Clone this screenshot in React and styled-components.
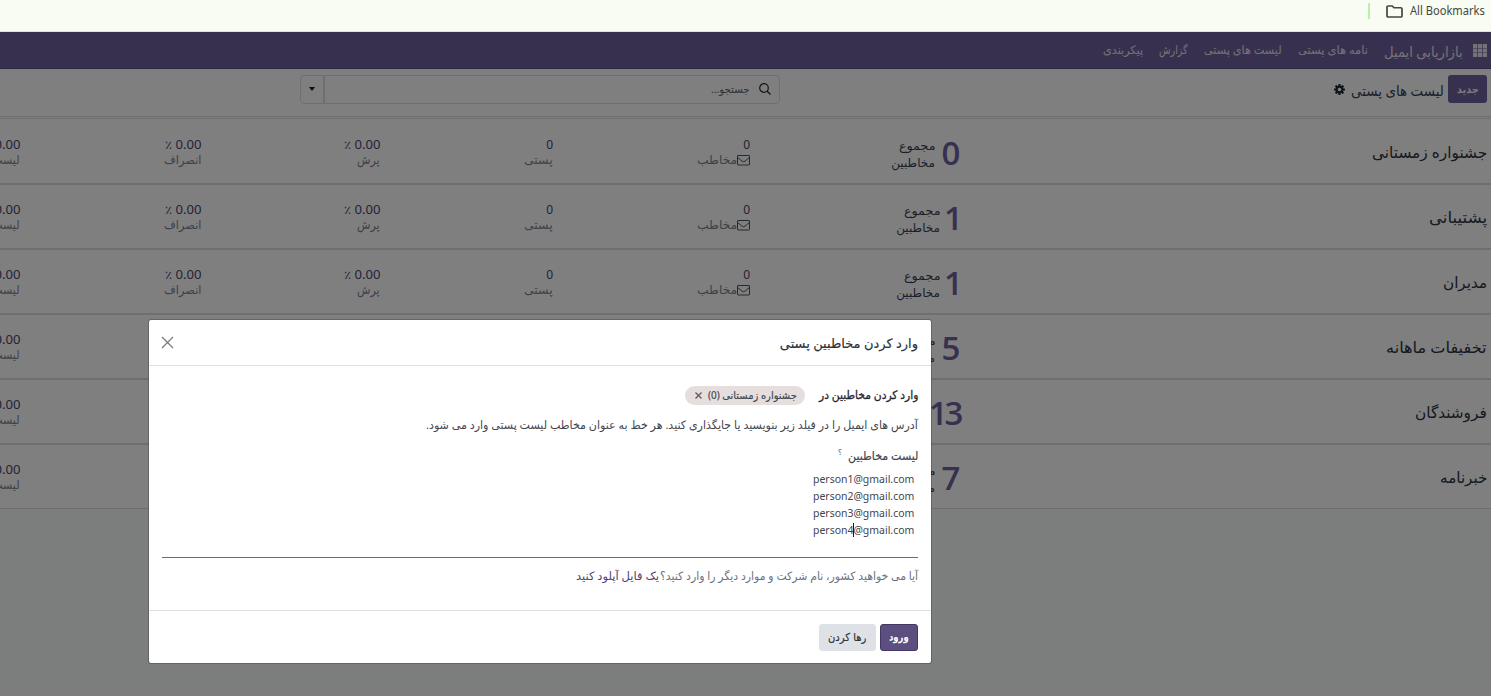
import React, { useLayoutEffect, useRef, useState } from 'react';
import styled, { createGlobalStyle } from 'styled-components';

const Global = createGlobalStyle`
  * { box-sizing: border-box; }
  html, body { margin: 0; padding: 0; overflow: hidden; }
  body { font-family: "Noto Sans", "DejaVu Sans", sans-serif; background: #fff; }
`;

const Screen = styled.div`
  width: 1491px;
  height: 696px;
  overflow: hidden;
  display: flex;
  flex-direction: column;
  position: relative;
`;

const FitBox = styled.span`
  display: block;
  flex: none;
  width: ${(p) => p.$w}px;
  direction: ${(p) => p.$dir || 'rtl'};
  white-space: nowrap;
`;
const FitInner = styled.span`
  display: inline-block;
  transform-origin: ${(p) => (p.$dir === 'ltr' ? 'left' : 'right')} center;
  -webkit-text-stroke: ${(p) => p.$stroke || 0}px currentColor;
`;

/* A label that keeps a fixed column width whatever font is available. */
function Fit({ w, dir, stroke, children }) {
  const ref = useRef(null);
  const [k, setK] = useState(1);
  useLayoutEffect(() => {
    setK(w / ref.current.offsetWidth);
  }, [w]);
  return (
    <FitBox $w={w} $dir={dir}>
      <FitInner ref={ref} $dir={dir} $stroke={stroke} style={{ transform: `scaleX(${k})` }}>
        {children}
      </FitInner>
    </FitBox>
  );
}

const BookmarksBar = styled.div`
  height: 32px;
  flex: none;
  background: #f9fcf3;
  border-bottom: 1px solid #dfe3da;
  display: flex;
  justify-content: flex-end;
  align-items: flex-start;
  padding: 3px 6px 0 0;
  color: #43483f;
  font-size: 12px;
  line-height: 16px;
`;
const BarDivider = styled.span`
  width: 2px;
  height: 16px;
  background: #baf0a8;
  margin-right: 16px;
`;
const FolderIcon = styled.svg`
  width: 17px;
  height: 13px;
  margin: 2px 7px 0 0;
`;

const Page = styled.div`
  flex: 1;
  direction: rtl;
  display: flex;
  flex-direction: column;
  background: #f9fafa;
  color: #374151;
  position: relative;
`;
const Navbar = styled.nav`
  height: 37px;
  flex: none;
  background: #71619e;
  border-bottom: 1px solid #5f5189;
  display: flex;
  align-items: flex-start;
  padding: 0 4px;
  color: #e6e4ee;
  font-size: 11.5px;
  line-height: 35px;
`;
const AppsIcon = styled.svg`
  width: 14px;
  height: 13px;
  margin: 12px 0 0 10px;
`;
const Brand = styled.div`
  font-size: 14px;
  line-height: 39px;
  margin-left: 16px;
`;
const NavItem = styled.div`
  margin-left: 16px;
`;

const ControlPanel = styled.div`
  height: 48px;
  flex: none;
  background: #fff;
  border-bottom: 1px solid #dcdee2;
  display: flex;
  align-items: flex-start;
  padding: 6px 4px 0;
`;
const NewButton = styled.button`
  width: 39px;
  height: 28px;
  padding: 0 8px;
  border: 0;
  border-radius: 3px;
  background: #71619e;
  color: #f4f2f8;
  font: bold 11px/30px "DejaVu Sans", sans-serif;
`;
const PageTitle = styled.div`
  margin: 0 4px 0 6px;
  font-size: 14px;
  line-height: 31px;
`;
const Gear = styled.svg`
  width: 11px;
  height: 11px;
  margin-top: 9px;
`;
const SearchGroup = styled.div`
  width: 480px;
  height: 29px;
  margin-right: 554px;
  border: 1px solid #dcdee2;
  border-radius: 4px;
  display: flex;
  color: #5c6370;
  font-size: 11px;
  line-height: 26px;
`;
const SearchField = styled.div`
  flex: 1;
  display: flex;
  align-items: flex-start;
  padding-right: 8px;
  border-left: 2px solid #dcdee2;
  gap: 9px;
`;
const SearchIcon = styled.svg`
  width: 12px;
  height: 12px;
  margin-top: 7px;
`;
const SearchToggle = styled.div`
  width: 22px;
  display: flex;
  justify-content: center;
  padding-top: 11px;
`;
const Caret = styled.span`
  width: 0;
  height: 0;
  border: 3px solid transparent;
  border-top: 4px solid #111827;
  border-bottom: 0;
`;

const List = styled.div`
  margin-top: 1px;
`;
const Record = styled.div`
  height: 65px;
  background: #fff;
  border-top: 1px solid #dcdee2;
  border-bottom: 1px solid #dcdee2;
  display: grid;
  grid-template-columns: 526px 211px 197px 173px 179px 181px 60px;
  padding-right: 4px;
  &:first-child {
    height: 66px;
    padding-top: 1px;
  }
`;
const Name = styled.div`
  font-size: 15.5px;
  line-height: 24px;
  padding-top: 20px;
  color: #2b3240;
`;
const Total = styled.div`
  display: flex;
  padding-top: 14px;
`;
const Number = styled.div`
  direction: ltr;
  font-family: "Open Sans", sans-serif;
  font-size: 33px;
  font-weight: 600;
  line-height: 38px;
  letter-spacing: ${(p) => (p.$w > 30 ? -3 : 0)}px;
  color: #71619e;
  width: ${(p) => p.$w}px;
  margin-left: 6px;
  display: flex;
  justify-content: center;
`;
const TotalLabel = styled.div`
  font-size: 12px;
  line-height: 17px;
  padding-top: 3px;
  color: #374151;
`;
const Stat = styled.div`
  padding-top: 17px;
`;
const Value = styled.div`
  font-size: 12px;
  line-height: 16px;
  color: #4a4372;
`;
const Caption = styled.div`
  font-size: 12px;
  line-height: 14px;
  color: #7b8190;
  display: flex;
`;
const Envelope = styled.svg`
  width: 13px;
  height: 11px;
  margin-top: 2px;
`;

const Backdrop = styled.div`
  position: absolute;
  inset: 0;
  background: rgba(0, 0, 0, 0.5);
`;
const Modal = styled.div`
  position: absolute;
  left: 148px;
  top: 319px;
  width: 784px;
  height: 345px;
  direction: rtl;
  background: #fff;
  background-clip: padding-box;
  border: 1px solid rgba(0, 0, 0, 0.2);
  border-radius: 3px;
  display: flex;
  flex-direction: column;
  color: #41464f;
`;
const ModalHeader = styled.div`
  height: 46px;
  flex: none;
  border-bottom: 1px solid #dee0e3;
  display: flex;
  justify-content: space-between;
  padding: 0 13px 0 12px;
  font-size: 13px;
  line-height: 46px;
  color: #2b313b;
`;
const CloseIcon = styled.svg`
  width: 13px;
  height: 13px;
  margin-top: 16px;
`;
const ModalBody = styled.div`
  height: 244px;
  flex: none;
  padding: 20px 13px 0;
`;
const FieldRow = styled.div`
  display: flex;
  height: 29px;
  font-size: 11.5px;
  line-height: 17px;
  color: #1f2733;
`;
const Tag = styled.span`
  display: flex;
  align-items: center;
  width: 120px;
  height: 19px;
  margin-right: 14px;
  padding-right: 8px;
  border-radius: 10px;
  background: #e6dedd;
  font-size: 10.5px;
  line-height: 19px;
  color: #41464f;
  gap: 6px;
`;
const TagClose = styled.svg`
  width: 7px;
  height: 7px;
`;
const Help = styled.div`
  height: 31px;
  font-size: 11.5px;
  line-height: 19px;
`;
const ListLabel = styled.div`
  display: flex;
  height: 24px;
  font-size: 11.5px;
  line-height: 19px;
  gap: 6px;
`;
const Hint = styled.sup`
  font-size: 8px;
  line-height: 12px;
  color: #4b6a88;
`;
const Emails = styled.div`
  height: 88px;
  border-bottom: 1px solid #71619e;
  padding: 0 4px 0 0;
  font-size: 11.5px;
  line-height: 17px;
`;
const EmailLine = styled.div`
  display: flex;
  height: 17px;
`;
const TextCursor = styled.i`
  display: inline-block;
  width: 1px;
  height: 14px;
  margin: 0 -1px 0 0;
  background: #000;
  vertical-align: -3px;
`;
const Upload = styled.div`
  display: flex;
  padding-top: 8px;
  font-size: 11.5px;
  line-height: 20px;
  color: #6b7280;
`;
const UploadLink = styled.a`
  color: #4e4373;
  margin-right: 1px;
`;
const ModalFooter = styled.div`
  flex: 1;
  border-top: 1px solid #dedfe5;
  display: flex;
  gap: 4px;
  padding: 13px 13px 0;
`;
const Button = styled.button`
  height: 27px;
  padding: 0 ${(p) => (p.$primary ? 8 : 8.5)}px;
  border-radius: 3px;
  border: 1px solid ${(p) => (p.$primary ? '#443764' : '#dee2e6')};
  background: ${(p) => (p.$primary ? '#5c4f80' : '#dee2e6')};
  color: ${(p) => (p.$primary ? '#fff' : '#2b313b')};
  font: ${(p) => (p.$primary ? 'bold' : 'normal')} 11px/25px "DejaVu Sans", sans-serif;
`;

const records = [
  { name: 'جشنواره زمستانی', w: 115, total: '0', nw: 20 },
  { name: 'پشتیبانی', w: 58, total: '1', nw: 15 },
  { name: 'مدیران', w: 44, total: '1', nw: 15 },
  { name: 'تخفیفات ماهانه', w: 101, total: '5', nw: 20 },
  { name: 'فروشندگان', w: 72, total: '13', nw: 33 },
  { name: 'خبرنامه', w: 47, total: '7', nw: 20 },
];

const rates = [
  ['پرش', 23],
  ['انصراف', 37],
  ['لیست سیاه', 52],
];

const emails = ['person1', 'person2', 'person3', 'person4'];

export default function App() {
  return (
    <Screen>
      <Global />
      <BookmarksBar>
        <BarDivider />
        <FolderIcon viewBox="0 0 17 14" preserveAspectRatio="none" fill="none" stroke="#43483f" strokeWidth="1.7">
          <path d="M1 2.2Q1 1 2.2 1H6.2L8 3H14.8Q16 3 16 4.2V11.8Q16 13 14.8 13H2.2Q1 13 1 11.8Z" />
        </FolderIcon>
        <Fit w={75} dir="ltr">All Bookmarks</Fit>
      </BookmarksBar>
      <Page>
        <Navbar>
          <AppsIcon viewBox="0 0 14 13" fill="#e6e4ee">
            {[0, 4.9, 9.8].map((x) =>
              [0, 4.5, 9].map((y) => <rect key={`${x}-${y}`} x={x} y={y} width="4.2" height="4" />)
            )}
          </AppsIcon>
          <Brand><Fit w={79}>بازاریابی ایمیل</Fit></Brand>
          <NavItem><Fit w={70}>نامه های پستی</Fit></NavItem>
          <NavItem><Fit w={78}>لیست های پستی</Fit></NavItem>
          <NavItem><Fit w={29}>گزارش</Fit></NavItem>
          <NavItem><Fit w={40}>پیکربندی</Fit></NavItem>
        </Navbar>
        <ControlPanel>
          <NewButton><Fit w={22}>جدید</Fit></NewButton>
          <PageTitle><Fit w={93}>لیست های پستی</Fit></PageTitle>
          <Gear viewBox="0 0 12 12">
            <g fill="#1f2937">
              {[0, 45, 90, 135].map((a) => (
                <rect key={a} x="4.8" y="0" width="2.4" height="12" rx="0.5" transform={`rotate(${a} 6 6)`} />
              ))}
              <circle cx="6" cy="6" r="4.4" />
            </g>
            <circle cx="6" cy="6" r="1.9" fill="#fff" />
          </Gear>
          <SearchGroup>
            <SearchField>
              <SearchIcon viewBox="0 0 12 12" fill="none" stroke="#1f2937" strokeWidth="1.2">
                <circle cx="5" cy="5" r="4.3" />
                <path d="M8 8L11.5 11.5" />
              </SearchIcon>
              <Fit w={39}>جستجو...</Fit>
            </SearchField>
            <SearchToggle><Caret /></SearchToggle>
          </SearchGroup>
        </ControlPanel>
        <List>
          {records.map((r) => (
            <Record key={r.name}>
              <Name><Fit w={r.w}>{r.name}</Fit></Name>
              <Total>
                <Number $w={r.nw}>{r.total}</Number>
                <TotalLabel>
                  <Fit w={36}>مجموع</Fit>
                  <Fit w={44}>مخاطبین</Fit>
                </TotalLabel>
              </Total>
              <Stat>
                <Value>0</Value>
                <Caption>
                  <Envelope viewBox="0 0 13 11" fill="none" stroke="#4b5563" strokeWidth="1">
                    <rect x="0.5" y="0.5" width="12" height="9.5" rx="0.5" />
                    <path d="M0.8 2.6L5 6.2Q6.5 7.3 8 6.2L12.2 2.6" />
                  </Envelope>
                  <Fit w={40}>مخاطب</Fit>
                </Caption>
              </Stat>
              <Stat>
                <Value>0</Value>
                <Caption><Fit w={29}>پستی</Fit></Caption>
              </Stat>
              {rates.map(([label, w]) => (
                <Stat key={label}>
                  <Value><Fit w={36}>0.00 ٪</Fit></Value>
                  <Caption><Fit w={w}>{label}</Fit></Caption>
                </Stat>
              ))}
            </Record>
          ))}
        </List>
        <Backdrop />
      </Page>
      <Modal>
        <ModalHeader>
          <Fit w={138} stroke={0.15}>وارد کردن مخاطبین پستی</Fit>
          <CloseIcon viewBox="0 0 13 13" stroke="#7c7c7c" strokeWidth="1.3">
            <path d="M1 1L12 12M12 1L1 12" />
          </CloseIcon>
        </ModalHeader>
        <ModalBody>
          <FieldRow>
            <Fit w={99} stroke={0.3}>وارد کردن مخاطبین در</Fit>
            <Tag>
              <Fit w={89} stroke={0.15}>جشنواره زمستانی (0)</Fit>
              <TagClose viewBox="0 0 7 7" stroke="#5c5c64" strokeWidth="1.3">
                <path d="M0.5 0.5L6.5 6.5M6.5 0.5L0.5 6.5" />
              </TagClose>
            </Tag>
          </FieldRow>
          <Help>
            <Fit w={492}>آدرس های ایمیل را در فیلد زیر بنویسید یا جایگذاری کنید. هر خط به عنوان مخاطب لیست پستی وارد می شود.</Fit>
          </Help>
          <ListLabel>
            <Fit w={70} stroke={0.2}>لیست مخاطبین</Fit>
            <Hint>؟</Hint>
          </ListLabel>
          <Emails>
            {emails.map((e, i) => (
              <EmailLine key={e}>
                <Fit w={101} dir="ltr">
                  {e}
                  {i === 3 && <TextCursor />}
                  @gmail.com
                </Fit>
              </EmailLine>
            ))}
          </Emails>
          <Upload>
            <Fit w={258}>آیا می خواهید کشور، نام شرکت و موارد دیگر را وارد کنید؟</Fit>
            <UploadLink><Fit w={83}>یک فایل آپلود کنید</Fit></UploadLink>
          </Upload>
        </ModalBody>
        <ModalFooter>
          <Button $primary><Fit w={20}>ورود</Fit></Button>
          <Button><Fit w={38} stroke={0.2}>رها کردن</Fit></Button>
        </ModalFooter>
      </Modal>
    </Screen>
  );
}
